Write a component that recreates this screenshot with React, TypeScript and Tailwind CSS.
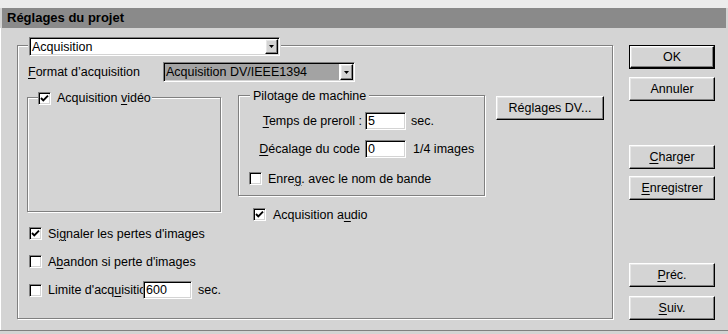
import React from 'react';

const sunken =
  "border border-t-[#808080] border-l-[#808080] border-r-white border-b-white shadow-[inset_1px_1px_0_#000,inset_-1px_-1px_0_#d4d4d4]";
const raised =
  "border border-t-white border-l-white border-r-black border-b-black shadow-[inset_-1px_-1px_0_#808080,inset_1px_1px_0_#e6e6e6]";
const etched = "border border-[#808080] shadow-[inset_1px_1px_0_#fff,1px_1px_0_#fff]";

const U = ({ children }: { children: React.ReactNode }) => (
  <span className="underline underline-offset-[2px] decoration-1">{children}</span>
);

function Check({ on = false }: { on?: boolean }) {
  return (
    <div className={`relative w-[13px] h-[13px] shrink-0 bg-white ${sunken}`}>
      {on && (
        <svg className="absolute left-[1px] top-[1px]" width="9" height="9" viewBox="0 0 9 9">
          <path d="M1 4 L3.3 6.4 L8 1.6" fill="none" stroke="#000" strokeWidth="1.9" />
        </svg>
      )}
    </div>
  );
}

function Combo({ className, text, selected = false }: { className: string; text: string; selected?: boolean }) {
  return (
    <div className={`flex bg-white p-[1px] ${sunken} ${className}`}>
      <div className={`flex-1 flex items-center pl-[1px] ${selected ? 'bg-[#a3a3a3] mr-[1px]' : ''}`}>{text}</div>
      <div className={`w-[13px] flex items-center justify-center bg-[#d4d4d4] ${raised}`}>
        <svg width="5" height="3" viewBox="0 0 5 3">
          <path d="M0 0H5L2.5 3Z" fill="#000" />
        </svg>
      </div>
    </div>
  );
}

function Field({ className, value }: { className: string; value: string }) {
  return <div className={`bg-white pl-[2px] flex items-center ${sunken} ${className}`}>{value}</div>;
}

function Btn({ children, className = '', isDefault = false }: { children: React.ReactNode; className?: string; isDefault?: boolean }) {
  return (
    <div className={`${isDefault ? 'border border-black' : ''} ${className}`}>
      <div className={`w-full h-full flex items-center justify-center ${raised}`}>{children}</div>
    </div>
  );
}

export default function App() {
  return (
    <div className="w-[728px] h-[334px] overflow-hidden bg-[#d4d4d4] text-black text-[12.5px] leading-[14px] font-['Liberation_Sans',Arial,sans-serif] flex flex-col">
      <div className="h-[8px] shrink-0 bg-[#ececec]" />
      <div className="h-[20px] shrink-0 mx-[2px] bg-[#8a8a8a] flex items-center pl-[5px] font-bold text-[13px]">
        Réglages du projet
      </div>

      <div className="h-[302px] shrink-0 flex pl-[16px] pt-[17px] border-l border-white">
        {/* panneau principal */}
        <div className={`relative w-[596px] h-[274px] ${etched}`}>
          <div className="absolute left-[10px] -top-[9px] px-[1px] bg-[#d4d4d4]">
            <Combo className="w-[251px] h-[19px]" text="Acquisition" />
          </div>

          <div className="pt-[16px] pl-[10px]">
            <div className="flex items-center h-[20px]">
              <div className="w-[135px]"><U>F</U>ormat d’acquisition</div>
              <Combo className="w-[192px] h-[20px]" text="Acquisition DV/IEEE1394" selected />
            </div>

            <div className="flex items-start mt-[13px] -ml-[1px]">
              <div className="w-[194px]">
                <div className={`relative h-[115px] mt-[2px] ${etched}`}>
                  <div className="absolute left-[10px] -top-[7px] h-[14px] flex items-center gap-[6px] pr-[1px] bg-[#d4d4d4]">
                    <Check on />
                    <span>Acquisition <U>v</U>idéo</span>
                  </div>
                </div>
                <div className="flex items-center gap-[6px] ml-[2px] mt-[15px] h-[13px]">
                  <Check on />
                  <span>Si<U>g</U>naler les pertes d'images</span>
                </div>
                <div className="flex items-center gap-[6px] ml-[2px] mt-[15px] h-[13px]">
                  <Check />
                  <span>A<U>b</U>andon si perte d'images</span>
                </div>
                <div className="flex items-center ml-[2px] mt-[13px] h-[18px] whitespace-nowrap">
                  <Check />
                  <span className="ml-[6px] w-[102px] overflow-hidden">Limite d'acq<U>u</U>isition</span>
                  <Field className="w-[49px] h-[18px] shrink-0" value="600" />
                  <span className="ml-[6px]">sec.</span>
                </div>
              </div>

              <div className="ml-[17px] w-[247px]">
                <div className={`relative h-[101px] ${etched}`}>
                  <div className="absolute left-[11px] -top-[7px] px-[3px] h-[14px] bg-[#d4d4d4]">Pilotage de machine</div>
                  <div className="pt-[16px]">
                    <div className="flex items-center h-[18px]">
                      <div className="w-[126px] text-right pr-[3px]"><U>T</U>emps de preroll :</div>
                      <Field className="w-[41px] h-[18px]" value="5" />
                      <span className="ml-[5px]">sec.</span>
                    </div>
                    <div className="flex items-center h-[18px] mt-[10px]">
                      <div className="w-[126px] text-right pr-[5px]"><U>D</U>écalage du code</div>
                      <Field className="w-[41px] h-[18px]" value="0" />
                      <span className="ml-[7px]">1/4 images</span>
                    </div>
                    <div className="flex items-center gap-[6px] pl-[10px] mt-[14px] h-[13px]">
                      <Check />
                      <span>Enre<U>g</U>. avec le nom de bande</span>
                    </div>
                  </div>
                </div>
                <div className="flex items-center gap-[7px] ml-[15px] mt-[12px] h-[13px]">
                  <Check on />
                  <span>Acquisition a<U>u</U>dio</span>
                </div>
              </div>

              <Btn className="ml-[11px] mt-[1px] w-[108px] h-[24px]">Réglages DV...</Btn>
            </div>
          </div>
        </div>

        {/* boutons */}
        <div className="ml-[16px] w-[86px] flex flex-col">
          <Btn isDefault className="h-[24px]">OK</Btn>
          <Btn className="h-[24px] mt-[8px]">Annuler</Btn>
          <Btn className="h-[24px] mt-[44px]"><span><U>C</U>harger</span></Btn>
          <Btn className="h-[24px] mt-[7px]"><span><U>E</U>nregistrer</span></Btn>
          <Btn className="h-[24px] mt-[63px]"><span><U>P</U>réc.</span></Btn>
          <Btn className="h-[24px] mt-[9px]"><span><U>S</U>uiv.</span></Btn>
        </div>
      </div>
      <div className="h-px shrink-0 bg-[#808080]" />
    </div>
  );
}
